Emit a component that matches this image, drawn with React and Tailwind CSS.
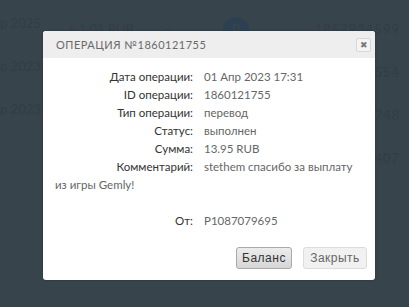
import React from "react";

const bgRows = [
  { date: "р 2025", amount: "+ 1.01 RUB", dash: "—", icon: true, id: "1857934599" },
  { date: "р 2023", amount: "", dash: "", icon: false, id: "1859554" },
  { date: "р 2023", amount: "", dash: "", icon: false, id: "1851748" },
  { date: "", amount: "", dash: "", icon: false, id: "1855407" },
];

function Row({ label, children }) {
  return (
    <div className="leading-[18px]">
      <span className="inline-block w-[138px] text-right text-[#333] mr-[11px]">{label}</span>
      <span className="text-[#666]">{children}</span>
    </div>
  );
}

export default function App() {
  return (
    <div className="relative w-[409px] h-[307px] overflow-hidden bg-[#37444c]" style={{ fontFamily: 'Lato, "Liberation Sans", sans-serif' }}>
      {/* faint background page */}
      <div className="flex flex-col pt-[8px] text-[13px] text-[#313e45]">
        {bgRows.map((r, i) => (
          <div key={i} className="flex items-center h-[43px] whitespace-nowrap">
            <div className="w-[34px] text-right -mt-[12px]">{r.date}</div>
            <div className="w-[100px] text-right">{r.amount}</div>
            <div className="w-[70px] text-center">{r.dash}</div>
            <div className="w-[64px] flex justify-center">
              {r.icon && (
                <div className="w-[26px] h-[26px] rounded-full bg-[#2c4051] flex items-center justify-center text-[#37444c] font-bold text-[15px]">P</div>
              )}
            </div>
            <div className="flex-1 text-right pr-[9px] tracking-[1px]">{r.id}</div>
          </div>
        ))}
      </div>

      {/* modal */}
      <div className="absolute left-[43px] top-[31px] w-[332px] h-[249px] bg-white rounded-[3px] overflow-hidden shadow-[0_0_2px_rgba(0,0,0,0.3)]">
        <div className="h-[27px] bg-[#eeeeee] flex items-center justify-between pl-[13px] pr-[4px]">
          <div className="text-[11px] tracking-[0.5px] text-[#6a6a6a] leading-none">ОПЕРАЦИЯ №1860121755</div>
          <div className="w-[15px] h-[14px] border border-[#d8d8d8] rounded-[2px] bg-[#f4f4f4] flex items-center justify-center text-[9px] text-[#777] leading-none">✖</div>
        </div>
        <div className="px-[12px] pt-[10px] text-[11.5px]">
          <Row label="Дата операции:">01 Апр 2023 17:31</Row>
          <Row label="ID операции:">1860121755</Row>
          <Row label="Тип операции:">перевод</Row>
          <Row label="Статус:">выполнен</Row>
          <Row label="Сумма:">13.95 RUB</Row>
          <div className="leading-[18px] whitespace-nowrap">
            <span className="inline-block w-[138px] text-right text-[#333] mr-[11px]">Комментарий:</span>
            <span className="text-[#666]">stethem спасибо за выплату</span>
            <br />
            <span className="text-[#666]">из игры Gemly!</span>
          </div>
          <div className="h-[18px]" />
          <Row label="От:">P1087079695</Row>
          <div className="flex justify-end gap-[11px] mt-[17px] -mr-[4px]">
            <button className="w-[56px] h-[22px] rounded-[3px] border border-[#a9a9a9] bg-gradient-to-b from-[#ececec] to-[#d6d6d6] text-[12px] text-[#333] tracking-[0.5px]" style={{ fontFamily: '"Liberation Sans", sans-serif' }}>Баланс</button>
            <button className="w-[64px] h-[22px] rounded-[3px] border border-[#dcdcdc] bg-[#f1f1f1] text-[12px] text-[#666] tracking-[0.5px]" style={{ fontFamily: '"Liberation Sans", sans-serif' }}>Закрыть</button>
          </div>
        </div>
      </div>
    </div>
  );
}
